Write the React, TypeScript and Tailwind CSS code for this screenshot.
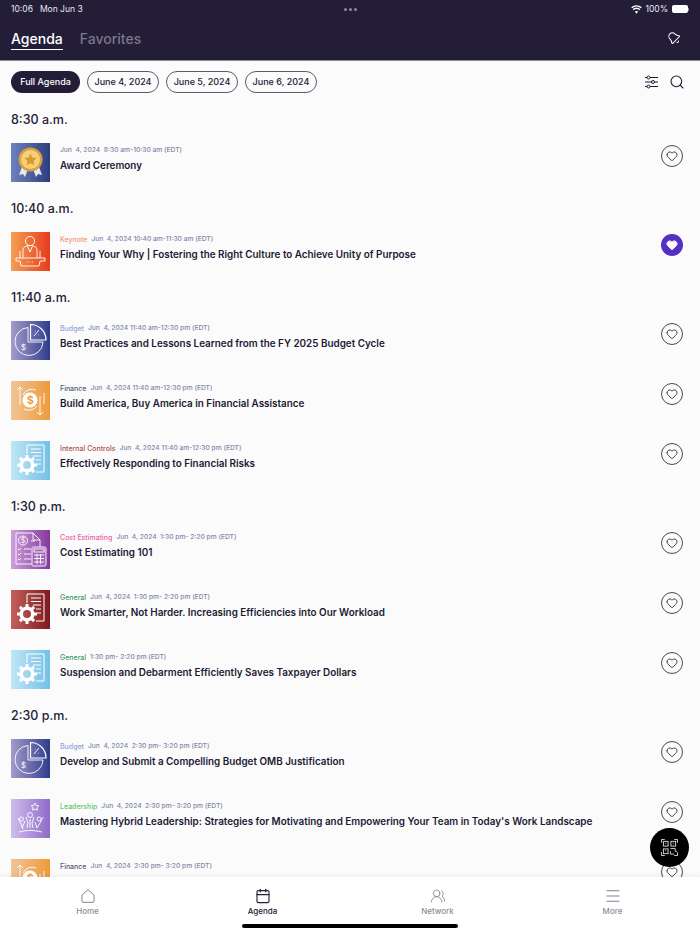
import { Heart, Search, Calendar, UsersRound, Menu, Bell } from 'lucide-react';
import type { ReactNode } from 'react';

function Frame({ id, from, to, children }: { id: string; from: string; to: string; children: ReactNode }) {
  return (
    <svg width="39" height="39" viewBox="0 0 39 39" className="shrink-0">
      <defs>
        <linearGradient id={id} x1="0" y1="0" x2="1" y2="0">
          <stop offset="0" stopColor={from} />
          <stop offset="1" stopColor={to} />
        </linearGradient>
      </defs>
      <rect width="39" height="39" fill={`url(#${id})`} />
      <g fill="none" stroke="#fff" strokeWidth="0.9">{children}</g>
    </svg>
  );
}

function AwardThumb({ id }: { id: string }) {
  return (
    <Frame id={id} from="#6f82bd" to="#2e3d7e">
      <path d="M11 24l-3 8 4-1 2 3 3-8zM28 24l3 8-4-1-2 3-3-8z" fill="#e6e9f2" stroke="none" />
      <circle cx="19.5" cy="16.5" r="12" fill="#d9a13c" stroke="none" />
      <circle cx="19.5" cy="16.5" r="9.5" fill="#f5cf7c" stroke="none" />
      <path d="M19.5 10.5l1.9 3.9 4.2.6-3 3 .7 4.2-3.8-2-3.8 2 .7-4.2-3-3 4.2-.6z" fill="#dc9a2c" stroke="none" />
    </Frame>
  );
}

function KeynoteThumb({ id }: { id: string }) {
  return (
    <Frame id={id} from="#f3a054" to="#e63c1c">
      <circle cx="19" cy="9" r="4.6" />
      <path d="M12 26v-8c0-3 3-4.500 7-4.500s7 1.500 7 4.500v8M16.500 14l2.500 6 2.500-6" />
      <path d="M9 19v7M29 19v7M5 26h29v3H29l-1 5H10l-1-5H5z" />
      <path d="M16 30h.8M18.500 30h.8M21 30h.8" />
    </Frame>
  );
}

function BudgetThumb({ id }: { id: string }) {
  return (
    <Frame id={id} from="#a39ccb" to="#2f3c8c">
      <path d="M17 6.500A14 14 0 1 0 32 21H17z" />
      <path d="M19.500 3.500A15.500 15.500 0 0 1 35 19H19.500z" strokeWidth="1.200" />
      <path d="M23 15l5-6M24 10h.6M27 14h.6" />
      <text x="10" y="28.500" fontSize="8" fill="#fff" stroke="none" fontFamily="Inter, sans-serif">$</text>
    </Frame>
  );
}

function FinanceThumb({ id }: { id: string }) {
  return (
    <Frame id={id} from="#efc596" to="#ef9a3c">
      <circle cx="19" cy="19" r="7.500" fill="#fff" stroke="none" />
      <text x="15.800" y="23" fontSize="11" fill="#ef9a3c" stroke="none" fontFamily="Inter, sans-serif" fontWeight="600">$</text>
      <path d="M9 24V6M6 9l3-3 3 3M29 15v19M26 31l3 3 3-3M33 12v11M12 14a10 10 0 0 1 13-5M26 25a10 10 0 0 1-13 3" />
    </Frame>
  );
}

function GearDocThumb({ id, from, to }: { id: string; from: string; to: string }) {
  return (
    <Frame id={id} from={from} to={to}>
      <path d="M16 13V4h17v27H25" strokeWidth="1" />
      <path d="M20 8h10M20 11.500h10M22 15h8M25 19h5M26 23h4" strokeWidth="1.200" />
      <circle cx="16" cy="24" r="5.800" stroke="#fff" strokeWidth="3.600" />
      <path d="M16 14v3M16 31v3M6 24h3M23 24h3M8.900 16.900l2.100 2.100M21 29l2.100 2.100M8.900 31.100L11 29M21 19l2.100-2.100" stroke="#fff" strokeWidth="3" />
    </Frame>
  );
}

function CostThumb({ id }: { id: string }) {
  return (
    <Frame id={id} from="#cf9fdc" to="#85389e">
      <path d="M5 3h17l7 7v7M21 34H5V3" />
      <path d="M22 3v7h7" />
      <circle cx="12" cy="10.500" r="4.500" />
      <text x="10" y="13" fontSize="7" fill="#fff" stroke="none" fontFamily="Inter, sans-serif">$</text>
      <path d="M7 19l1 1 2-2M7 24l1 1 2-2M7 29l1 1 2-2M13 19h7M13 24h7M13 29h7M20 11h4" />
      <rect x="21" y="17" width="14" height="19" rx="1.500" fill="#a566ba" />
      <rect x="23" y="19" width="10" height="3" />
      <path d="M23 25h10M23 28.500h10M23 32h10M26 24v10M29.500 24v10" />
    </Frame>
  );
}

function LeadershipThumb({ id }: { id: string }) {
  return (
    <Frame id={id} from="#d0bdea" to="#8f6bc8">
      <path d="M24 4l1.200 2.400 2.600.4-1.900 1.800.5 2.600-2.400-1.200-2.400 1.200.5-2.600-1.900-1.800 2.600-.4z" />
      <circle cx="19" cy="16" r="2.500" />
      <circle cx="10.500" cy="20" r="2" />
      <circle cx="28" cy="20" r="2" />
      <path d="M15 18l2 6-1 5M23 18l-2 6 1 5M7 19l3 6 2 5M32 18l-3 6-3 5M14 22l-3 7M24 23l2 6M19 20v9" />
      <path d="M8 33c7-2 15-2 23 0" />
    </Frame>
  );
}

type Row = { thumb: ReactNode; tag?: string; tagColor?: string; meta: string; title: string; fav?: boolean };

const sections: { time: string; rows: Row[] }[] = [
  {
    time: '8:30 a.m.',
    rows: [{ thumb: <AwardThumb id="t1" />, meta: 'Jun  4, 2024  8:30 am-10:30 am (EDT)', title: 'Award Ceremony' }],
  },
  {
    time: '10:40 a.m.',
    rows: [
      {
        thumb: <KeynoteThumb id="t2" />,
        tag: 'Keynote',
        tagColor: 'text-[#ef9a78]',
        meta: 'Jun  4, 2024 10:40 am-11:30 am (EDT)',
        title: 'Finding Your Why | Fostering the Right Culture to Achieve Unity of Purpose',
        fav: true,
      },
    ],
  },
  {
    time: '11:40 a.m.',
    rows: [
      {
        thumb: <BudgetThumb id="t3" />,
        tag: 'Budget',
        tagColor: 'text-[#8aa6dc]',
        meta: 'Jun  4, 2024 11:40 am-12:30 pm (EDT)',
        title: 'Best Practices and Lessons Learned from the FY 2025 Budget Cycle',
      },
      {
        thumb: <FinanceThumb id="t4" />,
        tag: 'Finance',
        tagColor: 'text-[#4d5a78]',
        meta: 'Jun  4, 2024 11:40 am-12:30 pm (EDT)',
        title: 'Build America, Buy America in Financial Assistance',
      },
      {
        thumb: <GearDocThumb id="t5" from="#bfe6f7" to="#74c0e6" />,
        tag: 'Internal Controls',
        tagColor: 'text-[#b0504c]',
        meta: 'Jun  4, 2024 11:40 am-12:30 pm (EDT)',
        title: 'Effectively Responding to Financial Risks',
      },
    ],
  },
  {
    time: '1:30 p.m.',
    rows: [
      {
        thumb: <CostThumb id="t6" />,
        tag: 'Cost Estimating',
        tagColor: 'text-[#ee5fa7]',
        meta: 'Jun  4, 2024  1:30 pm- 2:20 pm (EDT)',
        title: 'Cost Estimating 101',
      },
      {
        thumb: <GearDocThumb id="t7" from="#c4605c" to="#7e1a1c" />,
        tag: 'General',
        tagColor: 'text-[#3e9a62]',
        meta: 'Jun  4, 2024  1:30 pm- 2:20 pm (EDT)',
        title: 'Work Smarter, Not Harder. Increasing Efficiencies into Our Workload',
      },
      {
        thumb: <GearDocThumb id="t8" from="#bfe6f7" to="#74c0e6" />,
        tag: 'General',
        tagColor: 'text-[#3e9a62]',
        meta: '1:30 pm- 2:20 pm (EDT)',
        title: 'Suspension and Debarment Efficiently Saves Taxpayer Dollars',
      },
    ],
  },
  {
    time: '2:30 p.m.',
    rows: [
      {
        thumb: <BudgetThumb id="t9" />,
        tag: 'Budget',
        tagColor: 'text-[#8aa6dc]',
        meta: 'Jun  4, 2024  2:30 pm- 3:20 pm (EDT)',
        title: 'Develop and Submit a Compelling Budget OMB Justification',
      },
      {
        thumb: <LeadershipThumb id="t10" />,
        tag: 'Leadership',
        tagColor: 'text-[#5ccb6c]',
        meta: 'Jun  4, 2024  2:30 pm- 3:20 pm (EDT)',
        title: "Mastering Hybrid Leadership: Strategies for Motivating and Empowering Your Team in Today's Work Landscape",
      },
      {
        thumb: <FinanceThumb id="t11" />,
        tag: 'Finance',
        tagColor: 'text-[#4d5a78]',
        meta: 'Jun  4, 2024  2:30 pm- 3:20 pm (EDT)',
        title: 'EPA Multi-school Audits',
      },
    ],
  },
];

function SessionRow({ row }: { row: Row }) {
  return (
    <div className="flex h-[39px] pr-[6px]">
      {row.thumb}
      <div className="ml-[10px] min-w-0 flex-1 pt-[2px]">
        <div className="flex h-[11px] items-center gap-[4px] text-[6.7px] leading-[11px] font-medium whitespace-pre text-[#8088a6]">
          {row.tag && <span className={`text-[7px] ${row.tagColor}`}>{row.tag}</span>}
          <span>{row.meta}</span>
        </div>
        <div className="mt-[1px] text-[9.900px] leading-[16px] font-semibold whitespace-nowrap text-[#1c1a33]">
          {row.title}
        </div>
      </div>
      {row.fav ? (
        <div className="mt-[2px] ml-2 flex h-[22px] w-[22px] items-center justify-center rounded-full bg-[#5530c4]">
          <Heart size={12} className="fill-white text-white" />
        </div>
      ) : (
        <div className="mt-[2px] ml-2 flex h-[22px] w-[22px] items-center justify-center rounded-full border border-[#4a4a4f]">
          <Heart size={12} strokeWidth={1.7} className="text-[#222]" />
        </div>
      )}
    </div>
  );
}

function TabItem({ icon, label, active }: { icon: ReactNode; label: string; active?: boolean }) {
  return (
    <div className="flex w-[175px] flex-col items-center">
      <span className="flex h-[16px] items-center">{icon}</span>
      <span className={`mt-[1px] text-[8px] leading-[12px] font-medium ${active ? 'text-[#24203a]' : 'text-[#8d8d98]'}`}>
        {label}
      </span>
    </div>
  );
}

export default function App() {
  return (
    <div className="relative flex h-[934px] w-[700px] flex-col overflow-hidden bg-[#fbfbfb] font-['Inter',sans-serif]">
      <header className="h-[61px] shrink-0 border-b border-[#8d8a9c] bg-[#231d38] px-[11px] text-white">
        <div className="grid h-[17px] grid-cols-3 items-center pt-[1px] text-[8.5px]">
          <span className="flex gap-[7px] text-[#e8e7ee]">
            <span>10:06</span>
            <span>Mon Jun 3</span>
          </span>
          <span className="flex justify-center gap-[2px]">
            <i className="h-[3px] w-[3px] rounded-full bg-[#8d8a9c]" />
            <i className="h-[3px] w-[3px] rounded-full bg-[#8d8a9c]" />
            <i className="h-[3px] w-[3px] rounded-full bg-[#8d8a9c]" />
          </span>
          <span className="flex items-center justify-end gap-[3px] text-[#e8e7ee]">
            <svg width="11" height="9" viewBox="0 0 24 18" fill="#fff">
              <path d="M12 18l-3.600-4.400a5.500 5.500 0 0 1 7.200 0zM5.800 10.500l-2-2.400a12.800 12.800 0 0 1 16.400 0l-2 2.400a9.600 9.600 0 0 0-12.400 0zM2.500 6.500L.4 4a18 18 0 0 1 23.200 0l-2.100 2.500a14.800 14.800 0 0 0-19 0z" />
            </svg>
            <span>100%</span>
            <span className="ml-[1px] flex items-center">
              <span className="h-[8px] w-[16px] rounded-[2px] bg-white" />
              <span className="h-[3px] w-[1px] bg-[#8d8a9c]" />
            </span>
          </span>
        </div>
        <div className="mt-[12px] flex items-start justify-between">
          <div className="flex gap-[17px] text-[14px] leading-[20px] font-medium">
            <span className="border-b border-white">Agenda</span>
            <span className="text-[#7b7789]">Favorites</span>
          </div>
          <Bell size={14} strokeWidth={1.700} className="mt-[2px] mr-[8px] -rotate-45 text-white" />
        </div>
      </header>

      <main className="min-h-0 flex-1 overflow-hidden px-[11px]">
        <div className="mt-[10px] flex h-[22px] items-center gap-[7px] text-[9px] font-medium text-[#24203a]">
          <span className="flex h-[22px] w-[69px] items-center justify-center rounded-full bg-[#231d38] text-white">Full Agenda</span>
          <span className="flex h-[22px] w-[72px] items-center justify-center rounded-full border border-[#5d5a6c]">June 4, 2024</span>
          <span className="flex h-[22px] w-[72px] items-center justify-center rounded-full border border-[#5d5a6c]">June 5, 2024</span>
          <span className="flex h-[22px] w-[72px] items-center justify-center rounded-full border border-[#5d5a6c]">June 6, 2024</span>
          <span className="mr-[4px] ml-auto flex items-center gap-[11px]">
            <svg width="14" height="14" viewBox="0 0 14 14" fill="none" stroke="#1c1a33" strokeWidth="1">
              <path d="M1 2.500h13M1 7h13M1 11.500h13" />
              <circle cx="4.500" cy="2.500" r="1.500" fill="#fbfbfb" />
              <circle cx="9" cy="7" r="1.500" fill="#fbfbfb" />
              <circle cx="4.500" cy="11.500" r="1.500" fill="#fbfbfb" />
            </svg>
            <Search size={16} strokeWidth={1.6} className="text-[#1c1a33]" />
          </span>
        </div>
        <div className="mt-[13px]">
          {sections.map(section => (
            <section key={section.time} className="mb-[13px]">
              <h2 className="mb-[11px] h-[26px] text-[12.500px] leading-[28px] font-medium text-[#24203a]">{section.time}</h2>
              <div className="flex flex-col gap-[21px]">
                {section.rows.map(row => (
                  <SessionRow key={row.title} row={row} />
                ))}
              </div>
            </section>
          ))}
        </div>
      </main>

      <footer className="relative h-[57px] shrink-0 bg-white pt-[11px] shadow-[0_-2px_5px_rgba(0,0,0,0.05)]">
        <div className="flex">
          <TabItem
            icon={
              <svg width="16" height="16" viewBox="0 0 24 24" fill="none" stroke="#7c7c86" strokeWidth="1.400" strokeLinejoin="round">
                <path d="M3 10.500L12 2.500l9 8V20a1.500 1.500 0 0 1-1.500 1.500h-15A1.500 1.500 0 0 1 3 20z" />
              </svg>
            }
            label="Home"
          />
          <TabItem icon={<Calendar size={16} strokeWidth={1.7} className="text-[#24203a]" />} label="Agenda" active />
          <TabItem icon={<UsersRound size={16} strokeWidth={1.2} className="text-[#7c7c86]" />} label="Network" />
          <TabItem icon={<Menu size={18} strokeWidth={1.3} className="text-[#7c7c86]" />} label="More" />
        </div>
        <div className="absolute bottom-[6px] left-[242px] h-[4px] w-[216px] rounded-full bg-black" />
      </footer>

      <div className="absolute top-[828px] left-[650px] flex h-[39px] w-[39px] items-center justify-center rounded-full bg-black">
        <svg width="17" height="17" viewBox="0 0 18 18" fill="none" stroke="#d8d8d8" strokeWidth="1">
          <path d="M.5 4V.5H4M14 .5h3.500V4M.5 14v3.500H4M14 17.500h3.500V14" />
          <rect x="2.500" y="2.500" width="5" height="5" />
          <rect x="10.500" y="2.500" width="5" height="5" />
          <rect x="2.500" y="10.500" width="5" height="5" />
          <path d="M4.500 4.500h1M12.500 4.500h1M4.500 12.500h1M10 10h5v3h2M10 13v3h4" />
        </svg>
      </div>
    </div>
  );
}
